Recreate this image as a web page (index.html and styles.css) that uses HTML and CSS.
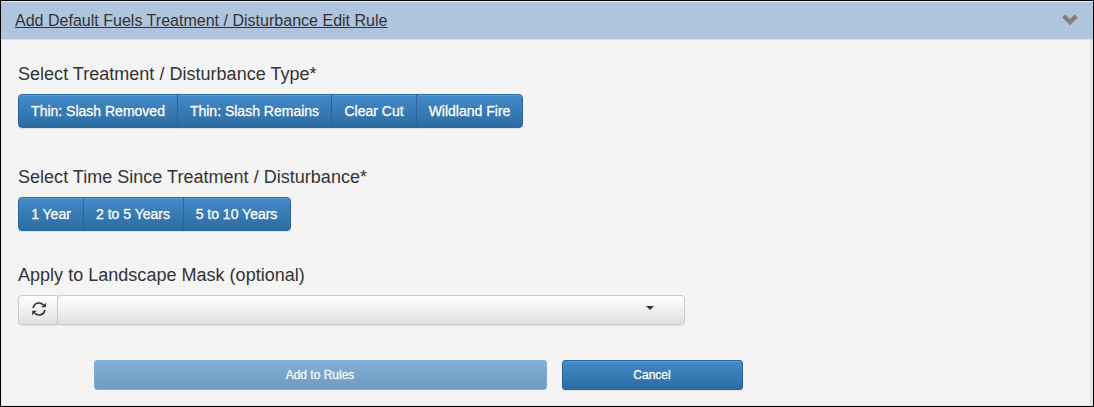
FILE: index.html
```html
<!DOCTYPE html>
<html lang="en">
<head>
<meta charset="utf-8">
<title>Edit Rule</title>
<link rel="stylesheet" href="styles.css">
</head>
<body>
<div class="panel">
  <div class="panel-heading">
    <a class="panel-title">Add Default Fuels Treatment / Disturbance Edit Rule</a>
    <svg class="chevron" width="16" height="12" viewBox="0 0 16 12"><path d="M3.3 0.4 8 5.1 12.7 0.4 15.8 3.5 8 11.3 0.2 3.5Z" fill="#808080"/></svg>
  </div>
  <div class="panel-body">
    <h4 class="label">Select Treatment / Disturbance Type*</h4>
    <div class="group types">
      <button class="btn primary w160">Thin: Slash Removed</button>
      <button class="btn primary w154">Thin: Slash Remains</button>
      <button class="btn primary w85">Clear Cut</button>
      <button class="btn primary w106">Wildland Fire</button>
    </div>
    <h4 class="label">Select Time Since Treatment / Disturbance*</h4>
    <div class="group times">
      <button class="btn primary w66">1 Year</button>
      <button class="btn primary w100">2 to 5 Years</button>
      <button class="btn primary w107">5 to 10 Years</button>
    </div>
    <h4 class="label">Apply to Landscape Mask (optional)</h4>
    <div class="group mask">
      <button class="btn plain refresh" aria-label="Refresh"><svg width="14" height="14" viewBox="0 0 14 14"><g fill="none" stroke="#333" stroke-width="1.7"><path d="M1.1 6C1.8 3 4 1 6.9 1c1.8 0 3.3.7 4.5 2"/><path d="M12.9 8C12.2 11 10 13 7.1 13c-1.8 0-3.3-.7-4.5-2"/></g><path d="M13.8.8V5.2H9.2ZM.2 13.2V8.8H4.8Z" fill="#333"/></svg></button>
      <button class="btn plain select" aria-label="Landscape mask"><span class="caret"></span></button>
    </div>
    <div class="actions">
      <button class="btn primary small add" disabled>Add to Rules</button>
      <button class="btn primary small cancel">Cancel</button>
    </div>
  </div>
</div>
</body>
</html>
```
FILE: styles.css
```css
* { box-sizing: border-box; }
body {
  margin: 0;
  font-family: "Liberation Sans", Arial, sans-serif;
  color: #333;
}
.panel {
  height: 407px;
  border: 1px solid #000;
  background: #f4f4f4;
  display: flex;
  flex-direction: column;
}
.panel-heading {
  height: 39px;
  flex: none;
  display: flex;
  align-items: center;
  justify-content: space-between;
  padding: 0 15px 0 14px;
  background: #b0c4de;
  border-top: 1px solid #e9eef5;
  border-bottom: 1px solid #ddd;
}
.panel-title {
  font-size: 16px;
  line-height: 18px;
  letter-spacing: .015px;
  text-decoration: underline;
}
.chevron { margin-bottom: 2px; }
.panel-body {
  flex: 1;
  padding: 24px 17px 0 16px;
  border-left: 1px solid #e8e8e8;
  border-right: 3px solid #e6e6e6;
  border-bottom: 1px solid #e6e6e6;
}
.label {
  margin: 0 0 10px;
  font-size: 18px;
  line-height: 20px;
  letter-spacing: .02px;
  font-weight: 400;
}
.group { display: flex; }
.types, .times { margin-bottom: 39px; }
.times { margin-bottom: 34px; }
.btn {
  height: 34px;
  padding: 0;
  border: 1px solid;
  font: 14px/20px "Liberation Sans", Arial, sans-serif;
  text-align: center;
}
.group .btn + .btn { margin-left: -1px; }
.group .btn:first-child { border-radius: 4px 0 0 4px; }
.group .btn:last-child { border-radius: 0 4px 4px 0; }
.primary {
  color: #fff;
  background: linear-gradient(#428bca, #2d6ca2);
  border-color: #2b669a;
  text-shadow: 0 -1px 0 rgba(0,0,0,.2);
  -webkit-text-stroke: .3px #fff;
  box-shadow: inset 0 1px 0 rgba(255,255,255,.15), 0 1px 1px rgba(0,0,0,.075);
}
.w160 { width: 160px; }
.w154 { width: 155px; }
.w85 { width: 86px; }
.w106 { width: 107px; }
.w66 { width: 66px; }
.w100 { width: 101px; }
.times .w100, .times .w107 { padding-right: 1px; }
.w107 { width: 108px; }
.plain {
  height: 30px;
  background: linear-gradient(#fff, #e0e0e0);
  border-color: #ccc;
  box-shadow: inset 0 1px 0 rgba(255,255,255,.15), 0 1px 1px rgba(0,0,0,.075);
}
.refresh {
  width: 40px;
  display: flex;
  align-items: center;
  justify-content: center;
  padding: 0 0 2px 1px;
}
.mask .btn.select:last-child {
  width: 628px;
  display: flex;
  justify-content: flex-end;
  padding: 10px 30px 0 0;
  border-radius: 4px;
}
.caret {
  border-top: 4px solid #333;
  border-left: 4px solid transparent;
  border-right: 4px solid transparent;
}
.actions {
  display: flex;
  gap: 15px;
  margin: 35px 0 0 76px;
}
.small {
  height: 30px;
  font-size: 12px;
  line-height: 18px;
  border-radius: 3px;
  padding-right: 1px;
}
.add { width: 453px; opacity: .65; border-color: #428bca; box-shadow: none; }
.cancel { width: 181px; }
```
